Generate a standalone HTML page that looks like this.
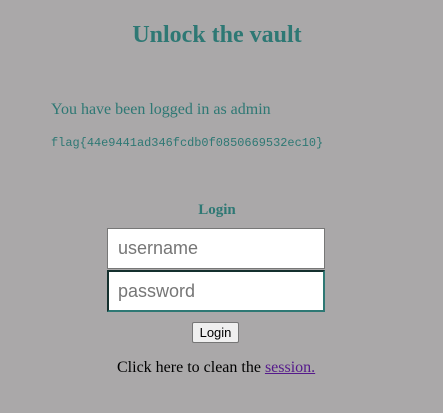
<!DOCTYPE html>
<html><head><style>
body{margin:0;width:443px;height:413px;background:#aaa8a9;font-family:"Liberation Serif",serif;position:relative;overflow:hidden}
.a{position:absolute;white-space:nowrap}
.t{color:#2e7874}
.in{position:absolute;left:107px;width:218px;background:#fff;box-sizing:border-box;font-family:"Liberation Sans",sans-serif;font-size:18px;color:#767676;padding-left:10px}
</style></head><body>
<div class="a t" style="left:0;width:434px;text-align:center;top:22px;font-size:24px;font-weight:bold">Unlock the vault</div>
<div class="a t" style="left:51px;top:101px;font-size:16px">You have been logged in as admin</div>
<div class="a t" style="left:51px;top:136px;font-family:'Liberation Mono',monospace;font-size:11.95px">flag{44e9441ad346fcdb0f0850669532ec10}</div>
<div class="a t" style="left:0;width:434px;text-align:center;top:202px;font-size:15px;font-weight:bold">Login</div>
<div class="in" style="top:228px;height:41px;border:1px solid #777;line-height:39px">username</div>
<div class="in" style="top:270px;height:42px;border:2px solid #14302e;border-right-color:#2e7874;border-bottom-color:#2e7874;line-height:38px;padding-left:9px">password</div>
<div class="a" style="left:192px;top:322px;width:47px;height:21px;box-sizing:border-box;background:#efefef;border:1px solid #767676;border-radius:2px;font-family:'Liberation Sans',sans-serif;font-size:13px;text-align:center;line-height:19px">Login</div>
<div class="a" style="left:117px;top:359px;font-size:16px;color:#000">Click here to clean the <span style="color:#551a8b;text-decoration:underline">session.</span></div>
</body></html>
